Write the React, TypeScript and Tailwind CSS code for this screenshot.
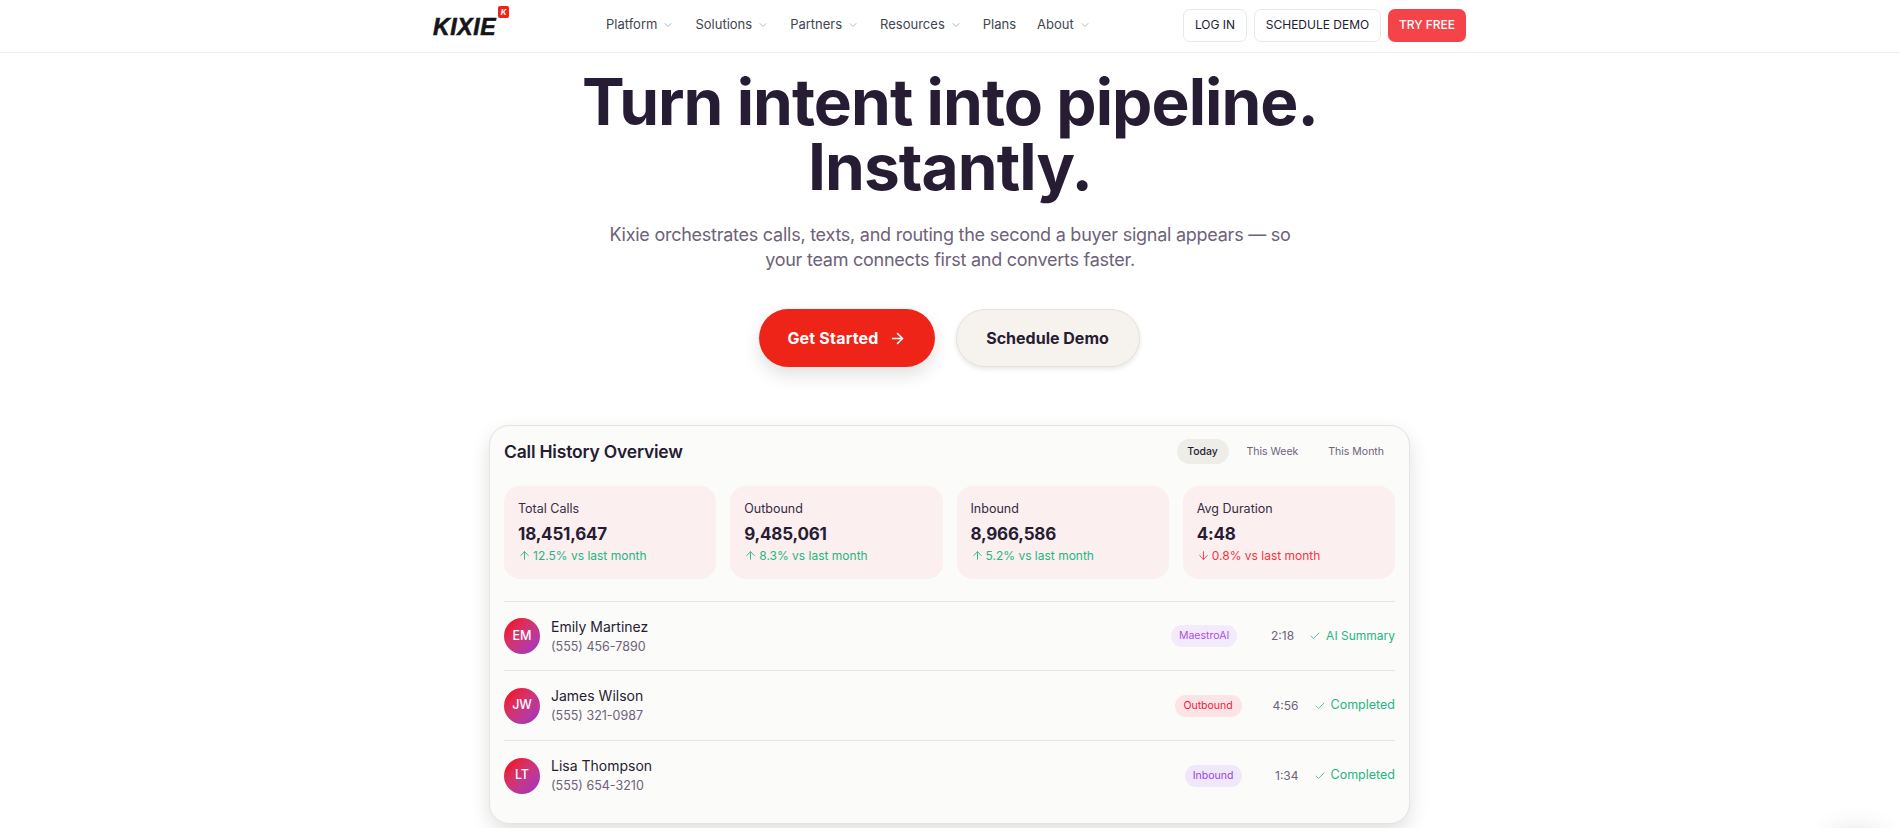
import { ArrowDown, ArrowRight, ArrowUp, Check, ChevronDown } from "lucide-react";

const navItems = [
  { label: "Platform", menu: true },
  { label: "Solutions", menu: true },
  { label: "Partners", menu: true },
  { label: "Resources", menu: true },
  { label: "Plans", menu: false },
  { label: "About", menu: true },
];

const stats = [
  { label: "Total Calls", value: "18,451,647", change: "12.5% vs last month", up: true },
  { label: "Outbound", value: "9,485,061", change: "8.3% vs last month", up: true },
  { label: "Inbound", value: "8,966,586", change: "5.2% vs last month", up: true },
  { label: "Avg Duration", value: "4:48", change: "0.8% vs last month", up: false },
];

const calls = [
  {
    initials: "EM",
    name: "Emily Martinez",
    phone: "(555) 456-7890",
    tag: "MaestroAI",
    tagClass: "bg-[#f4eafd] text-[#a94ff0] w-[66px]",
    time: "2:18",
    status: "AI Summary",
    statusClass: "text-[12px]",
    rowClass: "h-[69px]",
  },
  {
    initials: "JW",
    name: "James Wilson",
    phone: "(555) 321-0987",
    tag: "Outbound",
    tagClass: "bg-[#fce4e6] text-[#e8203c] w-[67px]",
    time: "4:56",
    status: "Completed",
    statusClass: "text-[12.5px]",
    rowClass: "h-[70px]",
  },
  {
    initials: "LT",
    name: "Lisa Thompson",
    phone: "(555) 654-3210",
    tag: "Inbound",
    tagClass: "bg-[#f0e8fa] text-[#9a3fe8] w-[57px]",
    time: "1:34",
    status: "Completed",
    statusClass: "text-[12.5px]",
    rowClass: "h-[70px]",
  },
];

function Header() {
  return (
    <header className="h-[53px] border-b border-[#f0f0f1] bg-white">
      <div className="ml-[433px] flex h-[50px] w-[1033px] items-center">
        <div className="flex w-[173px] items-start">
          <span className="mt-[4px] text-[23px] leading-none font-bold tracking-[0.6px] text-[#151519] italic [-webkit-text-stroke:0.6px_#151519] font-[family-name:'Liberation_Sans',sans-serif]">
            KIXIE
          </span>
          <span className="-mt-[6px] ml-[2px] flex h-[12px] w-[11px] items-center justify-center rounded-[2px] bg-[#ee2419] text-[8px] leading-none font-bold text-white italic">
            K
          </span>
        </div>
        <nav className="flex items-center gap-[21px]">
          {navItems.map((item) => (
            <a key={item.label} className="flex items-center gap-[5px] text-[13px] text-[#41464f]">
              {item.label}
              {item.menu && <ChevronDown className="h-[12px] w-[12px] text-[#9a9ea6]" strokeWidth={1.5} />}
            </a>
          ))}
        </nav>
        <div className="ml-auto flex items-center gap-[7px]">
          <a className="flex h-[33px] w-[64px] items-center justify-center rounded-[7px] border border-[#e7e8ea] text-[12px] text-[#1b2230]">
            LOG IN
          </a>
          <a className="flex h-[33px] w-[127px] items-center justify-center rounded-[7px] border border-[#e7e8ea] text-[12px] text-[#1b2230]">
            SCHEDULE DEMO
          </a>
          <a className="flex h-[33px] w-[78px] items-center justify-center rounded-[7px] bg-[#f44449] text-[12px] font-medium text-white">
            TRY FREE
          </a>
        </div>
      </div>
    </header>
  );
}

function Hero() {
  return (
    <section className="flex flex-col items-center pt-[16px]">
      <h1 className="text-center text-[64px] leading-[65px] font-bold tracking-[-0.95px] text-[#261c33]">
        Turn intent into pipeline.
        <br />
        Instantly.
      </h1>
      <p className="mt-[23px] w-[700px] text-center text-[18px] leading-[25px] tracking-[-0.25px] text-[#6d6279]">
        Kixie orchestrates calls, texts, and routing the second a buyer signal appears — so your team connects first and converts faster.
      </p>
      <div className="mt-[37px] mr-[2px] flex gap-[21px]">
        <a className="flex h-[58px] w-[176px] items-center justify-center gap-[10px] rounded-full bg-[#ee2419] text-[16px] font-bold tracking-[0.2px] text-white shadow-[0_8px_18px_rgba(0,0,0,0.12)]">
          Get Started
          <ArrowRight className="h-[17px] w-[17px]" strokeWidth={2.2} />
        </a>
        <a className="flex h-[58px] w-[184px] items-center justify-center rounded-full border border-[#e6e1da] bg-[#f6f3ef] text-[16px] font-bold text-[#261c33] shadow-[0_2px_5px_rgba(0,0,0,0.1)]">
          Schedule Demo
        </a>
      </div>
    </section>
  );
}

function CallCard() {
  return (
    <div className="mt-[58px] ml-[489px] h-[399px] w-[921px] rounded-[20px] border border-[#e4e3df] bg-[#fbfbf9] px-[14px] pt-[11px] shadow-[0_8px_20px_rgba(0,0,0,0.12)]">
      <div className="flex h-[49px] items-start justify-between">
        <h2 className="mt-[1px] text-[17.5px] leading-[28px] font-semibold tracking-[-0.2px] text-[#261c33]">Call History Overview</h2>
        <div className="flex items-center pt-[2px] text-[10.5px] text-[#6d6279]">
          <span className="flex h-[25px] w-[52px] items-center justify-center rounded-full bg-[#eeede8] font-medium text-[#261c33]">Today</span>
          <span className="ml-[18px]">This Week</span>
          <span className="mr-[11px] ml-[30px]">This Month</span>
        </div>
      </div>
      <div className="grid grid-cols-4 gap-[14px]">
        {stats.map((stat) => (
          <div key={stat.label} className="h-[93px] rounded-[16px] bg-[#fbeff0] px-[14px] pt-[12px]">
            <div className="text-[12.5px] leading-[21px] text-[#362c42]">{stat.label}</div>
            <div className="text-[17px] leading-[30px] font-bold tracking-[-0.2px] text-[#261c33]">{stat.value}</div>
            <div className={`-mt-[3px] flex items-center gap-[2px] text-[12px] leading-[19px] ${stat.up ? "text-[#27b582]" : "text-[#f5333f]"}`}>
              {stat.up ? <ArrowUp className="h-[13px] w-[13px]" strokeWidth={1.7} /> : <ArrowDown className="h-[13px] w-[13px]" strokeWidth={1.7} />}
              {stat.change}
            </div>
          </div>
        ))}
      </div>
      <div className="mt-[22px]">
        {calls.map((call) => (
          <div key={call.name} className={`flex items-center border-t border-[#e6e5df] ${call.rowClass}`}>
            <div className="flex h-[36px] w-[36px] items-center justify-center rounded-full bg-gradient-to-br from-[#ea1c38] from-20% to-[#a028cc] text-[12.5px] font-medium text-white">
              {call.initials}
            </div>
            <div className="ml-[11px] flex flex-col pt-[1px]">
              <span className="text-[14px] leading-[20px] text-[#261c33]">{call.name}</span>
              <span className="text-[12.5px] leading-[20px] text-[#6d6279]">{call.phone}</span>
            </div>
            <div className="ml-auto flex items-center text-[12px]">
              <span className={`flex h-[22px] items-center justify-center rounded-full text-[10.5px] ${call.tagClass}`}>{call.tag}</span>
              <span className="ml-[31px] w-[26px] text-right text-[#6d6279]">{call.time}</span>
              <span className={`ml-[15px] flex items-center gap-[5px] text-[#27b582] ${call.statusClass}`}>
                <Check className="h-[12px] w-[12px]" strokeWidth={1.5} />
                {call.status}
              </span>
            </div>
          </div>
        ))}
      </div>
    </div>
  );
}

export default function App() {
  return (
    <div className="relative h-[828px] overflow-hidden bg-white font-[family-name:Inter,sans-serif]">
      <Header />
      <Hero />
      <CallCard />
      {/* chat launcher peeking in from below the fold */}
      <div className="absolute top-[832px] right-[14px] h-[60px] w-[60px] rounded-full bg-white shadow-[0_0_30px_rgba(0,0,0,0.16)]" />
    </div>
  );
}
